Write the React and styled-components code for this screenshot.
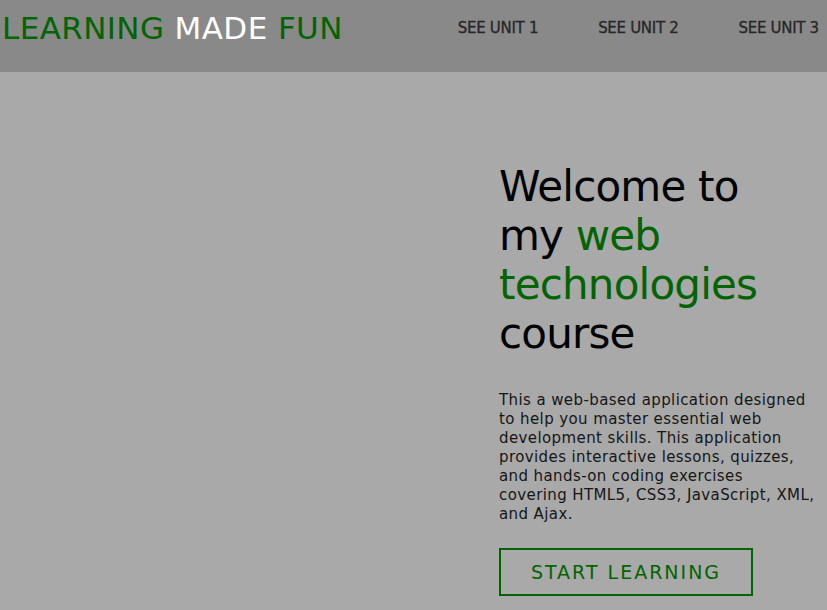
import React from "react";
import styled, { createGlobalStyle } from "styled-components";

const GlobalStyle = createGlobalStyle`
  html, body {
    margin: 0;
    padding: 0;
    background: #a9a9a9;
    font-family: "DejaVu Sans", "Open Sans", sans-serif;
    overflow: hidden;
  }
`;

const SHeader = styled.header`
  display: flex;
  align-items: center;
  height: 72px;
  padding: 0 0 16px 2px;
  box-sizing: border-box;
  background-color: #898989;
  white-space: nowrap;
`;

const SLogo = styled.div`
  font-size: 31px;
  font-weight: 500;
  color: #006400;
  letter-spacing: 0.4px;

  span {
    color: #ffffff;
  }
`;

const SNav = styled.nav`
  display: flex;
  gap: 60px;
  margin-left: 115px;
`;

const SNavLink = styled.a`
  font-size: 15px;
  font-weight: 500;
  color: #262626;
  text-decoration: none;
  letter-spacing: -0.3px;
  -webkit-text-stroke: 0.3px #262626;
`;

const SHero = styled.main`
  display: grid;
  grid-template-columns: 499px 1fr;
  padding-top: 90px;
`;

const SImageArea = styled.div``;

const SContent = styled.section`
  display: flex;
  flex-direction: column;
  align-items: flex-start;
  max-width: 316px;
`;

const STitle = styled.h1`
  margin: 0;
  font-size: 42px;
  font-weight: 500;
  line-height: 49px;
  color: #000000;
  letter-spacing: -0.8px;
  white-space: nowrap;

  em {
    font-style: normal;
    color: #006400;
  }
`;

const SText = styled.p`
  margin: 33px 0 0;
  font-size: 15px;
  line-height: 19px;
  letter-spacing: 0.4px;
  color: #161616;
`;

const SButton = styled.button`
  margin-top: 24px;
  width: 254px;
  height: 48px;
  background: transparent;
  border: 2px solid #006400;
  color: #006400;
  font-family: inherit;
  font-size: 19px;
  letter-spacing: 2px;
  cursor: pointer;
`;

export default function App() {
  return (
    <>
      <GlobalStyle />
      <SHeader>
        <SLogo>
          LEARNING <span>MADE</span> FUN
        </SLogo>
        <SNav>
          <SNavLink href="#">SEE UNIT 1</SNavLink>
          <SNavLink href="#">SEE UNIT 2</SNavLink>
          <SNavLink href="#">SEE UNIT 3</SNavLink>
        </SNav>
      </SHeader>
      <SHero>
        <SImageArea />
        <SContent>
          <STitle>
            Welcome to
            <br />
            my <em>web</em>
            <br />
            <em>technologies</em>
            <br />
            course
          </STitle>
          <SText>
            This a web-based application designed to help you master essential web
            development skills. This application provides interactive lessons,
            quizzes, and hands-on coding exercises covering HTML5, CSS3,
            JavaScript, XML, and Ajax.
          </SText>
          <SButton>START LEARNING</SButton>
        </SContent>
      </SHero>
    </>
  );
}
